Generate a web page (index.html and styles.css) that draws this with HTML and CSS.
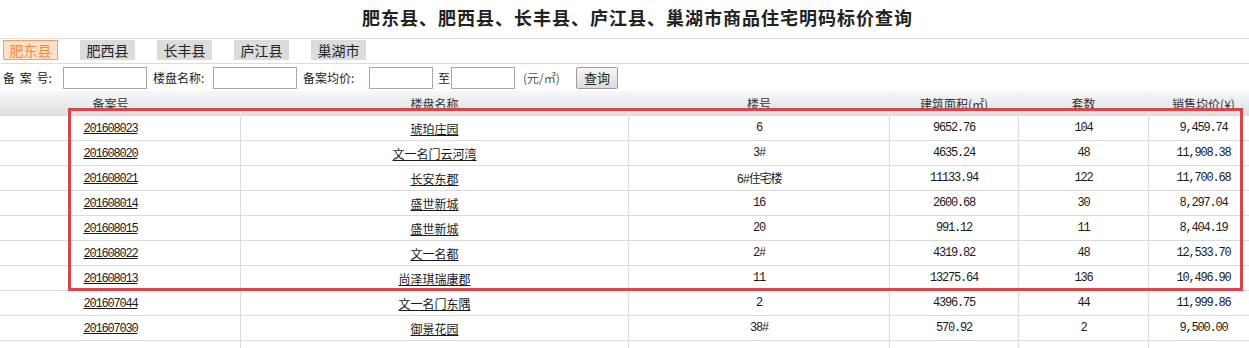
FILE: index.html
```html
<!DOCTYPE html>
<html lang="zh-CN">
<head>
    <meta charset="UTF-8">
    <title>商品住宅明码标价查询</title>
    <link rel="stylesheet" href="styles.css">
</head>
<body>
    <div class="page">
        <h1 class="title">肥东县、肥西县、长丰县、庐江县、巢湖市商品住宅明码标价查询</h1>

        <div class="tabs">
            <span class="tab tab-on">肥东县</span>
            <span class="tab">肥西县</span>
            <span class="tab">长丰县</span>
            <span class="tab">庐江县</span>
            <span class="tab">巢湖市</span>
        </div>

        <form class="search" onsubmit="return false;">
            <label class="lbl lbl-no">备 案 号:</label>
            <input type="text" class="box box-long">
            <label class="lbl lbl-name">楼盘名称:</label>
            <input type="text" class="box box-long">
            <label class="lbl lbl-price">备案均价:</label>
            <input type="text" class="box box-short">
            <label class="lbl lbl-to">至</label>
            <input type="text" class="box box-short">
            <span class="unit">(元/㎡)</span>
            <button type="button" class="btn">查询</button>
        </form>

        <table class="list">
            <thead>
                <tr>
                    <th class="c1">备案号</th>
                    <th class="c2">楼盘名称</th>
                    <th class="c3">楼号</th>
                    <th class="c4">建筑面积(㎡)</th>
                    <th class="c5">套数</th>
                    <th class="c6">销售均价(¥)</th>
                </tr>
            </thead>
            <tbody id="filas"></tbody>
        </table>

        <!-- recuadro rojo marcado encima de la tabla -->
        <div class="mark"></div>
    </div>

    <script>
        let registros = [
            ["201608023", "琥珀庄园", "6", "9652.76", "104", "9,459.74"],
            ["201608020", "文一名门云河湾", "3#", "4635.24", "48", "11,908.38"],
            ["201608021", "长安东郡", "6#住宅楼", "11133.94", "122", "11,700.68"],
            ["201608014", "盛世新城", "16", "2600.68", "30", "8,297.04"],
            ["201608015", "盛世新城", "20", "991.12", "11", "8,404.19"],
            ["201608022", "文一名都", "2#", "4319.82", "48", "12,533.70"],
            ["201608013", "尚泽琪瑞康郡", "11", "13275.64", "136", "10,496.90"],
            ["201607044", "文一名门东隅", "2", "4396.75", "44", "11,999.86"],
            ["201607030", "御景花园", "38#", "570.92", "2", "9,500.00"],
            ["", "", "", "", "", ""]
        ];

        let filas = document.getElementById("filas");
        registros.forEach(r => {
            let tr = document.createElement("tr");
            tr.innerHTML =
                `<td class="c1">${r[0] ? `<a href="#" class="num">${r[0]}</a>` : ""}</td>` +
                `<td class="c2">${r[1] ? `<a href="#">${r[1]}</a>` : ""}</td>` +
                `<td class="c3 num">${r[2]}</td>` +
                `<td class="c4 num">${r[3]}</td>` +
                `<td class="c5 num">${r[4]}</td>` +
                `<td class="c6 num">${r[5]}</td>`;
            filas.appendChild(tr);
        });
    </script>
</body>
</html>
```

FILE: styles.css
```css
html, body { margin: 0; overflow: hidden; background: #fff; }
body { font-family: "Liberation Sans", "Noto Sans CJK SC", sans-serif; font-size: 12px; color: #333; }
.page { position: relative; width: 1249px; }

.title {
    margin: 0;
    height: 35px;
    line-height: 35px;
    padding: 0 0 3px 26px;
    border-bottom: 1px solid #dedede;
    text-align: center;
    font-family: "Noto Sans CJK SC", sans-serif;
    font-size: 18px;
    font-weight: bold;
    letter-spacing: 1px;
    color: #222;
}

/* pestañas de condados */
.tabs {
    display: flex;
    gap: 22px;
    height: 23px;
    padding: 1px 0 0 3px;
    border-bottom: 1px solid #dedede;
}
.tab {
    box-sizing: border-box;
    width: 55px;
    height: 20px;
    line-height: 18px;
    text-align: center;
    font-family: "Noto Sans CJK SC", sans-serif;
    font-size: 14px;
    color: #222;
    background: #dcdcdc;
    border: 1px solid #dcdcdc;
}
.tab-on { background: #fde0c6; border-color: #f0a066; color: #f28a3e; }

/* formulario de búsqueda */
.search {
    display: flex;
    align-items: center;
    height: 27px;
    margin: 0;
    padding-left: 3px;
}
.lbl { font-family: "Noto Sans CJK SC", sans-serif; font-size: 12px; color: #222; white-space: pre; }
.lbl-no { width: 60px; word-spacing: 2px; }
.lbl-name { width: 60px; margin-left: 6px; }
.lbl-price { width: 66px; margin-left: 6px; }
.lbl-to { width: 13px; margin-left: 5px; }
.box {
    box-sizing: border-box;
    height: 22px;
    margin: 0;
    padding: 0 2px;
    border: 1px solid #a9a9a9;
    background: #fff;
}
.box-long { width: 84px; }
.box-short { width: 64px; }
.unit { width: 45px; margin-left: 8px; color: #555; font-family: "Noto Sans CJK SC", sans-serif; }
.btn {
    box-sizing: border-box;
    width: 42px;
    height: 22px;
    margin-left: 8px;
    padding: 0;
    font-family: "Noto Sans CJK SC", sans-serif;
    font-size: 13px;
    color: #222;
    background: linear-gradient(#f7f7f7, #dcdcdc);
    border: 1px solid #9a9a9a;
    border-radius: 2px;
}

/* tabla de resultados */
.list { border-collapse: separate; border-spacing: 0; width: 1259px; table-layout: fixed; }
.list th, .list td {
    box-sizing: border-box;
    height: 25px;
    padding: 0;
    text-align: center;
    border-right: 1px solid #dcdcdc;
    border-bottom: 1px solid #dcdcdc;
    white-space: nowrap;
    overflow: hidden;
}
.list th {
    font-weight: normal;
    font-family: "Noto Sans CJK SC", sans-serif;
    color: #333;
    background: linear-gradient(#f6f8f9, #dde1e4);
    border-right-color: #eceef0;
}
.list td { color: #1a1a1a; }
.list a { color: #1a1a1a; text-decoration: underline; font-family: "Noto Sans CJK SC", sans-serif; }
.num { font-family: "Liberation Mono", "Noto Sans CJK SC", monospace !important; font-size: 12px; letter-spacing: -1.2px; }

.c1 { width: 241px; padding-right: 19px !important; }
.c2 { width: 388px; }
.c3 { width: 261px; }
.c4 { width: 129px; }
.c5 { width: 130px; }
.c6 { width: 110px; }

.mark {
    position: absolute;
    left: 68px;
    top: 108px;
    width: 1175px;
    height: 183px;
    box-sizing: border-box;
    border: 3px solid #d6474a;
}
```
